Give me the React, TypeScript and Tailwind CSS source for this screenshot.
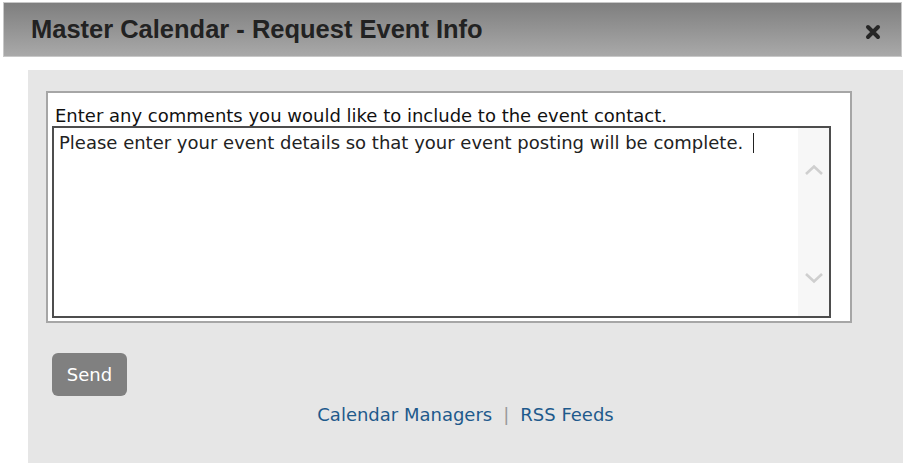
export default function App() {
  return (
    <div className="w-[906px] h-[463px] bg-white overflow-hidden font-['DejaVu_Sans',Verdana,sans-serif]">
      {/* dialog title bar */}
      <div className="mt-[2px] ml-[3px] mr-[4px] h-[55px] flex items-center justify-between border border-[#c8c8c8] bg-gradient-to-b from-[#7f7f7f] to-[#a9a9a9] pl-[27px] pr-[20px]">
        <h1 className="font-['Liberation_Sans',Arial,sans-serif] font-bold text-[26px] text-[#222] scale-x-[0.98] origin-left">
          Master Calendar - Request Event Info
        </h1>
        <svg width="16" height="16" viewBox="0 0 16 16" className="mt-[4px]">
          <path d="M3 3 L13 13 M13 3 L3 13" stroke="#262626" strokeWidth="4" strokeLinecap="round" />
        </svg>
      </div>

      {/* body */}
      <div className="mt-[13px] ml-[28px] mr-[3px] h-[393px] bg-[#e6e6e6] pt-[21px] px-[18px]">
        <div className="mr-[33px] bg-white border-2 border-[#a6a6a6] h-[232px] pl-[4px] pr-[19px] pt-[13px]">
          <label className="block text-[18px] leading-[20px] text-[#111] pl-[3px]">
            Enter any comments you would like to include to the event contact.
          </label>
          <div className="flex h-[192px] border-2 border-[#4d4d4d]">
            <div className="flex-1 px-[5px] pt-[4px] text-[18px] leading-[22px] text-[#222] whitespace-nowrap">
              Please enter your event details so that your event posting will be complete.
              <span className="inline-block w-[1px] h-[20px] bg-[#222] ml-[10px] align-[-4px]" />
            </div>
            <div className="w-[31px] bg-[#f7f7f7] flex flex-col items-center pt-[36px]">
              <svg width="20" height="12" viewBox="0 0 20 12">
                <path d="M2 10 L10 2.5 L18 10" fill="none" stroke="#cfcfcf" strokeWidth="2.6" />
              </svg>
              <svg width="20" height="12" viewBox="0 0 20 12" className="mt-[96px]">
                <path d="M2 2 L10 9.5 L18 2" fill="none" stroke="#cfcfcf" strokeWidth="2.6" />
              </svg>
            </div>
          </div>
        </div>

        <button className="mt-[30px] ml-[6px] w-[75px] h-[43px] rounded-[6px] bg-[#808080] text-white text-[18px]">
          Send
        </button>

        <div className="mt-[5px] flex justify-center items-center text-[18px] text-[#1e5a8c]">
          <a className="hover:underline">Calendar Managers</a>
          <span className="mx-[11px] text-[#9a9a9a]">|</span>
          <a className="hover:underline">RSS Feeds</a>
        </div>
      </div>
    </div>
  );
}
